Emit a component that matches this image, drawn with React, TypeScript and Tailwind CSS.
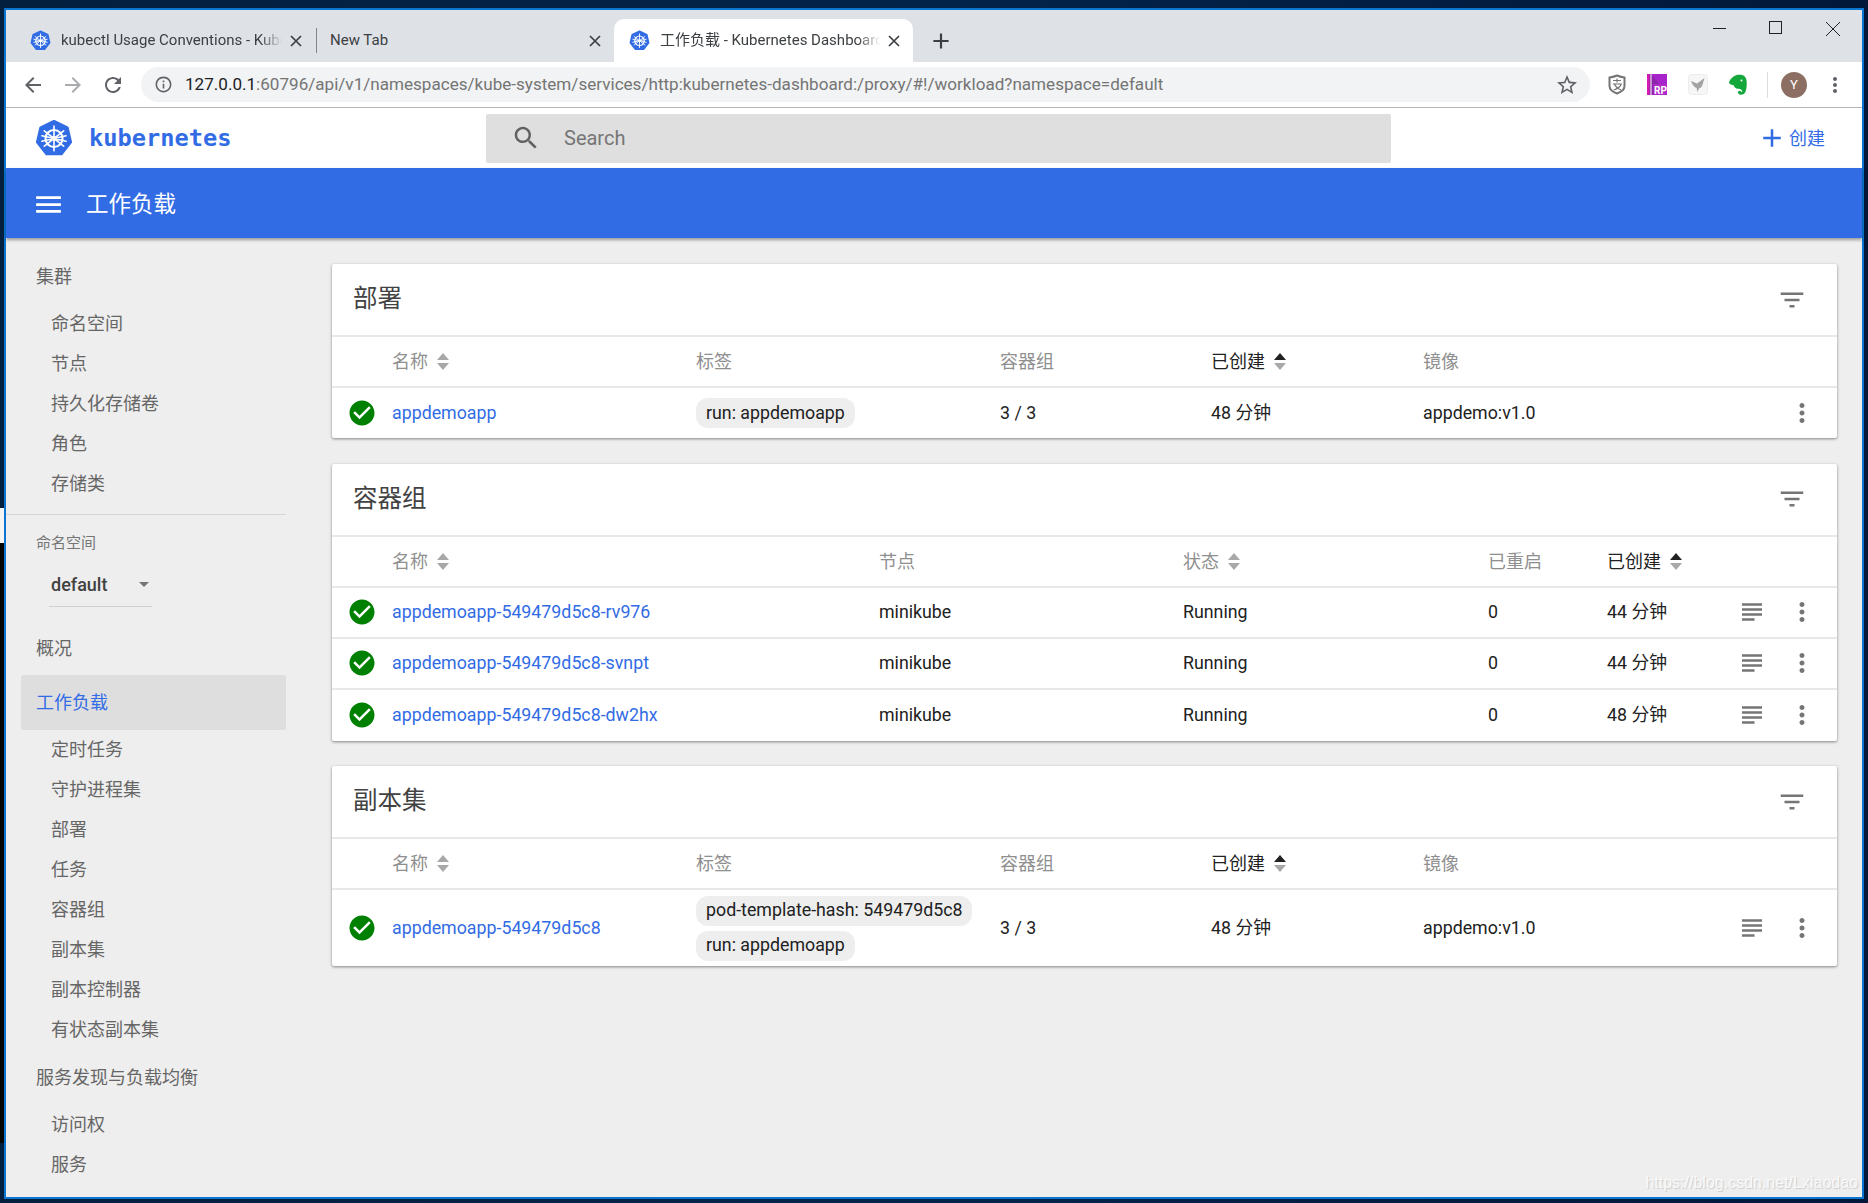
import React from 'react';

const CJK = "font-['Roboto','Noto_Sans_CJK_SC',sans-serif]";

const Mi = ({ d, size = 30, className = '' }: { d: string; size?: number; className?: string }) => (
  <svg width={size} height={size} viewBox="0 0 24 24" fill="currentColor" className={`shrink-0 ${className}`}>
    <path d={d} />
  </svg>
);

const paths = {
  menu: 'M3 18h18v-2H3v2zm0-5h18v-2H3v2zm0-7v2h18V6H3z',
  search:
    'M15.5 14h-.79l-.28-.27C15.41 12.59 16 11.11 16 9.5 16 5.91 13.09 3 9.5 3S3 5.91 3 9.5 5.91 16 9.5 16c1.61 0 3.09-.59 4.23-1.57l.27.28v.79l5 4.99L20.49 19l-4.99-5zm-6 0C7.01 14 5 11.99 5 9.5S7.01 5 9.5 5 14 7.01 14 9.5 11.99 14 9.5 14z',
  filter: 'M10 18h4v-2h-4v2zM3 6v2h18V6H3zm3 7h12v-2H6v2z',
  more: 'M12 8c1.1 0 2-.9 2-2s-.9-2-2-2-2 .9-2 2 .9 2 2 2zm0 2c-1.1 0-2 .9-2 2s.9 2 2 2 2-.9 2-2-.9-2-2-2zm0 6c-1.1 0-2 .9-2 2s.9 2 2 2 2-.9 2-2-.9-2-2-2z',
  logs: 'M14 17H4v2h10v-2zm6-8H4v2h16V9zM4 15h16v-2H4v2zM4 5v2h16V5H4z',
  check:
    'M12 2C6.48 2 2 6.48 2 12s4.48 10 10 10 10-4.48 10-10S17.52 2 12 2zm-2 15l-5-5 1.41-1.41L10 14.17l7.59-7.59L19 8l-9 9z',
  add: 'M19 13h-6v6h-2v-6H5v-2h6V5h2v6h6v2z',
  back: 'M20 11H7.83l5.59-5.59L12 4l-8 8 8 8 1.41-1.41L7.83 13H20v-2z',
  forward: 'M12 4l-1.41 1.41L16.17 11H4v2h12.17l-5.58 5.59L12 20l8-8z',
  reload:
    'M17.65 6.35C16.2 4.9 14.21 4 12 4c-4.42 0-7.99 3.58-7.99 8s3.57 8 7.99 8c3.73 0 6.84-2.55 7.73-6h-2.08c-.82 2.33-3.04 4-5.65 4-3.31 0-6-2.69-6-6s2.69-6 6-6c1.66 0 3.14.69 4.22 1.78L13 11h7V4l-2.35 2.35z',
  info: 'M11 7h2v2h-2zm0 4h2v6h-2zm1-9C6.48 2 2 6.48 2 12s4.48 10 10 10 10-4.48 10-10S17.52 2 12 2zm0 18c-4.41 0-8-3.59-8-8s3.59-8 8-8 8 3.59 8 8-3.59 8-8 8z',
  star: 'M22 9.24l-7.19-.62L12 2 9.19 8.63 2 9.24l5.46 4.73L5.82 21 12 17.27 18.18 21l-1.63-7.03L22 9.24zM12 15.4l-3.76 2.27 1-4.28-3.32-2.88 4.38-.38L12 6.1l1.71 4.04 4.38.38-3.32 2.88 1 4.28L12 15.4z',
};

const K8sLogo = ({ size = 38 }: { size?: number }) => (
  <svg width={size} height={size} viewBox="0 0 40 40" className="shrink-0">
    <path
      d="M20 2.5 L34 9.2 L37.5 24.4 L27.8 36.6 L12.2 36.6 L2.5 24.4 L6 9.2 Z"
      fill="#326ce5"
      stroke="#326ce5"
      strokeWidth="3"
      strokeLinejoin="round"
    />
    <g stroke="#fff" fill="none" strokeLinecap="round">
      <circle cx="20" cy="20.5" r="9" strokeWidth="2.2" />
      <path d="M20 7.5v26M9.8 12.4l20.4 16.2M30.2 12.4L9.8 28.6M7.3 23.4l25.4-5.8M32.7 23.4L7.3 17.6" strokeWidth="1.7" />
    </g>
    <circle cx="20" cy="20.5" r="2.6" fill="#fff" />
  </svg>
);

const CloseX = ({ className = '' }: { className?: string }) => (
  <svg width="12" height="12" viewBox="0 0 12 12" className={`shrink-0 ${className}`} stroke="#3c4043" strokeWidth="1.7">
    <path d="M1 1l10 10M11 1L1 11" />
  </svg>
);

const Tab = ({ title, icon, active, fade, className = '' }: { title: string; icon?: boolean; active?: boolean; fade?: boolean; className?: string }) => (
  <div className={`flex h-[43px] items-center ${active ? 'rounded-t-[10px] bg-white' : ''} ${className}`}>
    {icon && <K8sLogo size={21} />}
    <span
      className={`ml-[10px] min-w-0 flex-1 overflow-hidden whitespace-nowrap text-[15px] text-[#3c4043] ${CJK} ${fade ? '[mask-image:linear-gradient(to_left,transparent,black_22px)]' : ''}`}
    >
      {title}
    </span>
    <CloseX className="ml-[8px]" />
  </div>
);

const ExtIcons = () => (
  <div className="flex items-center">
    <svg width="18" height="21" viewBox="0 0 18 21" className="ml-[18px]">
      <path d="M1.500 3.500C5 3 7 2.500 9 1.500c2 1 4 1.500 7.500 2v8.500c0 3.500-3.500 6-7.500 7.500-4-1.500-7.500-4-7.500-7.500z" fill="#fff" stroke="#757575" strokeWidth="2" />
      <path d="M5 6.500h8M9 4.500v4M4.800 10h8.400c-.8 2.800-4 5-7.500 6M6.500 10.500c1.500 2.500 3.500 4.500 6.500 5.500" stroke="#757575" strokeWidth="1.200" fill="none" />
    </svg>
    <svg width="20" height="21" viewBox="0 0 20 21" className="ml-[21px]">
      <rect width="20" height="21" fill="#8e24aa" />
      <rect width="2.500" height="21" fill="#d81bb0" />
      <path d="M3.500 0H20V18z" fill="#a624c9" />
      <rect x="3.500" y="0" width="1" height="21" fill="#fff" />
      <rect x="6.500" y="10" width="13.500" height="11" fill="#b02acb" />
      <text x="7" y="19.500" fontSize="10" fontWeight="700" fill="#fff" fontFamily="Roboto, sans-serif">RP</text>
    </svg>
    <svg width="20" height="21" viewBox="0 0 20 21" className="ml-[21px]">
      <rect x="0.500" y="0.500" width="19" height="20" rx="3" fill="#f6f6f6" stroke="#ececec" />
      <path d="M3 7l6 2.500L16.500 4 14.500 11c-.5 2-2 3-3.500 3.500l-1.500 3.500-1-4C6 13 4 10 3 7z" fill="#a3a3a3" />
    </svg>
    <svg width="18" height="22" viewBox="0 0 18 22" className="ml-[21px]">
      <path
        d="M4 3C6 1 9 .5 12 .8c3.500.4 5.500 3 5.700 7 .2 4-.2 8.200-1.700 11-1.200 2-5 2.700-6.500 1-1.200-1.500-.3-3.300 1.700-3 .8.100 1 .7.6 1.200l1.500-.5c-.2-2-2.300-3-4.300-2.800C6.500 14.700 5 13 4.500 11 3 11 1 10.500 0 9c0-2.500 2-4.500 4-6z"
        fill="#14a83c"
      />
      <circle cx="12.500" cy="6.500" r="1" fill="#fff" />
    </svg>
    <div className="ml-[20px] h-[26px] w-px bg-[#dadce0]" />
    <div className={`ml-[13px] flex h-[26px] w-[26px] items-center justify-center rounded-full bg-[#8d6e63] text-[13px] text-white ${CJK}`}>Y</div>
    <Mi d={paths.more} size={24} className="ml-[16px] text-[#5f6368]" />
  </div>
);

const BrowserChrome = () => (
  <>
    <div className="flex h-[52px] shrink-0 items-end bg-[#dee1e6]">
      <Tab title="kubectl Usage Conventions - Kubernetes" icon fade className="w-[310px] pl-[24px] pr-[14px]" />
      <div className="mb-[9px] h-[25px] w-px bg-[#80868b]" />
      <Tab title="New Tab" className="w-[297px] pl-[3px] pr-[13px]" />
      <Tab title="工作负载 - Kubernetes Dashboard" icon active fade className="w-[299px] pl-[15px] pr-[13px]" />
      <div className="mb-[8px] ml-[15px] text-[#3c4043]">
        <Mi d={paths.add} size={26} />
      </div>
      <div className="ml-auto flex h-full items-start pt-[11px] text-[#222]">
        <div className="mt-[7px] h-px w-[13px] bg-[#222]" />
        <div className="ml-[43px] h-[13px] w-[13px] border border-[#222]" />
        <svg width="16" height="16" viewBox="0 0 16 16" stroke="#222" strokeWidth="1" className="ml-[43px] mr-[21px]">
          <path d="M1 1l14 14M15 1L1 15" />
        </svg>
      </div>
    </div>
    <div className="flex h-[46px] shrink-0 items-center border-b border-[#b4b4b4] bg-white pl-[15px] pr-[15px]">
      <Mi d={paths.back} size={24} className="text-[#5f6368]" />
      <Mi d={paths.forward} size={24} className="ml-[16px] text-[#a9abae]" />
      <Mi d={paths.reload} size={24} className="ml-[16px] text-[#5f6368]" />
      <div className="ml-[16px] flex h-[35px] w-[1453px] items-center rounded-full bg-[#f1f3f4] pl-[13px] pr-[11px]">
        <Mi d={paths.info} size={19} className="text-[#5f6368]" />
        <span className={`ml-[12px] flex-1 whitespace-nowrap text-[17.08px] text-[#757575] ${CJK}`}>
          <span className="text-[#202124]">127.0.0.1</span>:60796/api/v1/namespaces/kube-system/services/http:kubernetes-dashboard:/proxy/#!/workload?namespace=default
        </span>
        <Mi d={paths.star} size={24} className="text-[#5f6368]" />
      </div>
      <ExtIcons />
    </div>
  </>
);

const AppHeader = () => (
  <>
    <div className="flex h-[60px] shrink-0 items-center bg-white">
      <div className="flex w-[480px] items-center pl-[29px]">
        <K8sLogo />
        <span className="ml-[16px] pt-[2px] font-['DejaVu_Sans_Mono',monospace] text-[23.7px] font-bold text-[#326ce5]">kubernetes</span>
      </div>
      <div className="flex h-[49px] w-[905px] items-center rounded-[2px] bg-[#dfdfdf] pl-[25px]">
        <Mi d={paths.search} className="text-[#616161]" />
        <span className={`ml-[23px] text-[20px] text-[#757575] ${CJK}`}>Search</span>
      </div>
      <div className={`ml-auto flex items-center pr-[37px] text-[18px] text-[#326ce5] ${CJK}`}>
        <Mi d={paths.add} />
        <span className="ml-[2px]">创建</span>
      </div>
    </div>
    <div className={`relative z-10 flex h-[70px] shrink-0 items-center bg-[#326ce5] pl-[26px] pt-[3px] text-white shadow-[0_2px_3px_rgba(0,0,0,0.35)] ${CJK}`}>
      <Mi d={paths.menu} size={33} />
      <span className="ml-[21px] text-[22.5px]">工作负载</span>
    </div>
  </>
);

const NavHead = ({ children, className = '' }: { children: React.ReactNode; className?: string }) => (
  <div className={`flex h-[40px] items-center pl-[30px] text-[18px] text-[#666666] ${className}`}>{children}</div>
);
const NavItem = ({ children }: { children: React.ReactNode }) => (
  <div className="flex h-[40px] items-center pl-[45px] text-[18px] text-[#666666]">{children}</div>
);

const Sidebar = () => (
  <div className={`w-[300px] shrink-0 pt-[18px] ${CJK}`}>
    <NavHead>集群</NavHead>
    <div className="mt-[7px]">
      {['命名空间', '节点', '持久化存储卷', '角色', '存储类'].map((t) => (
        <NavItem key={t}>{t}</NavItem>
      ))}
    </div>
    <div className="mt-[11px] h-px w-[280px] bg-[#d6d6d6]" />
    <div className="mt-[16px] flex h-[24px] items-center pl-[30px] text-[15px] text-[#757575]">命名空间</div>
    <div className="ml-[43px] mt-[9px] flex h-[43px] w-[103px] items-center border-b border-[#cfcfcf] pb-[2px] pl-[2px] text-[18px] font-medium text-[#424242]">
      default
      <span className="ml-auto mr-[3px] h-0 w-0 border-x-[5px] border-t-[5px] border-x-transparent border-t-[#757575]" />
    </div>
    <NavHead className="mt-[21px]">概况</NavHead>
    <div className="ml-[15px] mt-[7px] flex h-[55px] w-[265px] items-center rounded-[2px] bg-[#dedede] pl-[15px] text-[18px] text-[#326ce5]">工作负载</div>
    <div className="-mt-px">
      {['定时任务', '守护进程集', '部署', '任务', '容器组', '副本集', '副本控制器', '有状态副本集'].map((t) => (
        <NavItem key={t}>{t}</NavItem>
      ))}
    </div>
    <NavHead className="mt-[8px]">服务发现与负载均衡</NavHead>
    <div className="mt-[7px]">
      {['访问权', '服务'].map((t) => (
        <NavItem key={t}>{t}</NavItem>
      ))}
    </div>
  </div>
);

const Sort = ({ on }: { on?: boolean }) => (
  <span className="ml-[9px] flex flex-col gap-[3px]">
    <span className={`h-0 w-0 border-x-[6px] border-b-[7px] border-x-transparent ${on ? 'border-b-[#212121]' : 'border-b-[#a8a8a8]'}`} />
    <span className="h-0 w-0 border-x-[6px] border-t-[7px] border-x-transparent border-t-[#a8a8a8]" />
  </span>
);

const Chip = ({ children }: { children: React.ReactNode }) => (
  <span className="flex h-[30px] w-fit items-center whitespace-nowrap rounded-[12px] bg-[#eeeeee] px-[10px] text-[17.8px] text-[#212121]">{children}</span>
);

const Head = ({ children, sort, on }: { children: React.ReactNode; sort?: boolean; on?: boolean }) => (
  <div className={`flex items-center text-[18px] ${on ? 'text-[#212121]' : 'text-[#8f8f8f]'}`}>
    {children}
    {sort && <Sort on={on} />}
  </div>
);

const Actions = ({ logs }: { logs?: boolean }) => (
  <div className="flex items-center justify-end pr-[20px] text-[#757575]">
    {logs && <Mi d={paths.logs} className="mr-[20px]" />}
    <Mi d={paths.more} />
  </div>
);

const Status = () => (
  <div className="pl-[15px] text-[#008000]">
    <Mi d={paths.check} />
  </div>
);

const Card = ({ title, children }: { title: string; children: React.ReactNode }) => (
  <div className="rounded-[2px] bg-white shadow-[0_1px_3px_rgba(0,0,0,0.45)]">
    <div className="flex h-[73px] items-center justify-between border-b-2 border-[#e8e8e8] pl-[21px] pr-[30px]">
      <span className="text-[24.5px] text-[#424242]">{title}</span>
      <Mi d={paths.filter} className="text-[#757575]" />
    </div>
    {children}
  </div>
);

const dplCols = 'grid grid-cols-[60px_304px_304px_211px_212px_1fr] items-center';
const podCols = 'grid grid-cols-[60px_487px_304px_305px_119px_125px_1fr] items-center';
const cell = 'text-[17.8px] text-[#212121]';
const link = 'text-[17.8px] text-[#326ce5]';

const pods = [
  { name: 'appdemoapp-549479d5c8-rv976', age: '44 分钟' },
  { name: 'appdemoapp-549479d5c8-svnpt', age: '44 分钟' },
  { name: 'appdemoapp-549479d5c8-dw2hx', age: '48 分钟' },
];

const Content = () => (
  <div className={`flex min-w-0 flex-1 flex-col gap-[25.5px] pl-[26px] pr-[25px] pt-[26px] ${CJK}`}>
    <Card title="部署">
      <div className={`${dplCols} h-[51px] border-b-2 border-[#e8e8e8]`}>
        <div />
        <Head sort>名称</Head>
        <Head>标签</Head>
        <Head>容器组</Head>
        <Head sort on>已创建</Head>
        <Head>镜像</Head>
      </div>
      <div className={`${dplCols} h-[50px]`}>
        <Status />
        <span className={link}>appdemoapp</span>
        <Chip>run: appdemoapp</Chip>
        <span className={cell}>3 / 3</span>
        <span className={cell}>48 分钟</span>
        <div className="flex items-center justify-between">
          <span className={cell}>appdemo:v1.0</span>
          <Actions />
        </div>
      </div>
    </Card>

    <Card title="容器组">
      <div className={`${podCols} h-[51px] border-b-2 border-[#e8e8e8]`}>
        <div />
        <Head sort>名称</Head>
        <Head>节点</Head>
        <Head sort>状态</Head>
        <Head>已重启</Head>
        <Head sort on>已创建</Head>
        <div />
      </div>
      {pods.map((p, i) => (
        <div key={p.name} className={`${podCols} h-[51px] ${i < 2 ? 'border-b-2 border-[#e8e8e8]' : ''}`}>
          <Status />
          <span className={link}>{p.name}</span>
          <span className={cell}>minikube</span>
          <span className={cell}>Running</span>
          <span className={cell}>0</span>
          <span className={cell}>{p.age}</span>
          <Actions logs />
        </div>
      ))}
    </Card>

    <Card title="副本集">
      <div className={`${dplCols} h-[51px] border-b-2 border-[#e8e8e8]`}>
        <div />
        <Head sort>名称</Head>
        <Head>标签</Head>
        <Head>容器组</Head>
        <Head sort on>已创建</Head>
        <Head>镜像</Head>
      </div>
      <div className={`${dplCols} h-[76px]`}>
        <Status />
        <span className={link}>appdemoapp-549479d5c8</span>
        <div className="flex flex-col gap-[5px]">
          <Chip>pod-template-hash: 549479d5c8</Chip>
          <Chip>run: appdemoapp</Chip>
        </div>
        <span className={cell}>3 / 3</span>
        <span className={cell}>48 分钟</span>
        <div className="flex items-center justify-between">
          <span className={cell}>appdemo:v1.0</span>
          <Actions logs />
        </div>
      </div>
    </Card>
  </div>
);

export default function App() {
  return (
    <div className="relative flex h-[1203px] w-[1868px] flex-col overflow-hidden bg-gradient-to-r from-[#04203f] via-[#03244a] to-[#02183a] pb-[4px] pl-[4px] pr-[4px] pt-[8px]">
      <div className="absolute left-0 top-[508px] h-[35px] w-[4px] bg-[#f4f4f4]" />
      <div className="absolute left-0 top-[543px] h-[600px] w-[4px] bg-[#050505]" />
      <div className="flex min-h-0 flex-1 flex-col border-2 border-[#0b76d1] bg-[#eeeeee]">
        <BrowserChrome />
        <AppHeader />
        <div className="flex min-h-0 flex-1 overflow-hidden">
          <Sidebar />
          <Content />
        </div>
      </div>
      <div className="absolute bottom-[8px] right-[10px] font-['Liberation_Sans',sans-serif] text-[16px] text-white/80 [text-shadow:1px_1px_1px_rgba(0,0,0,0.15)]">
        https://blog.csdn.net/Lxiaodao
      </div>
    </div>
  );
}
